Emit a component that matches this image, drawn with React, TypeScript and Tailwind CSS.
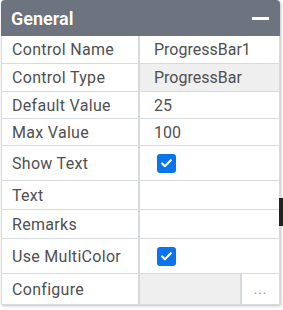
import { Check } from 'lucide-react';

type Row = {
  label: string;
  h: string;
  value?: string;
  kind?: 'text' | 'readonly' | 'check' | 'button';
};

const rows: Row[] = [
  { label: 'Control Name', value: 'ProgressBar1', h: 'h-[28px]' },
  { label: 'Control Type', value: 'ProgressBar', kind: 'readonly', h: 'h-[28px]' },
  { label: 'Default Value', value: '25', h: 'h-[27px]' },
  { label: 'Max Value', value: '100', h: 'h-[27px]' },
  { label: 'Show Text', kind: 'check', h: 'h-[35px]' },
  { label: 'Text', h: 'h-[29px]' },
  { label: 'Remarks', h: 'h-[29px]' },
  { label: 'Use MultiColor', kind: 'check', h: 'h-[35px]' },
  { label: 'Configure', kind: 'button', h: 'h-[31px]' },
];

function Checkbox() {
  return (
    <span className="w-[19px] h-[19px] rounded-[3px] bg-[#0a74ec] flex items-center justify-center">
      <Check className="w-[13px] h-[13px] text-white" strokeWidth={4} />
    </span>
  );
}

export default function App() {
  return (
    <div className="relative w-[283px] h-[310px] bg-white font-['Roboto','Liberation_Sans',sans-serif]">
      <div className="ml-[1px] w-[279px] shadow-[1px_1px_3px_rgba(0,0,0,0.25)] rounded-t-[4px] overflow-hidden">
        {/* Header */}
        <div className="h-[36px] bg-[#6d737f] flex items-center justify-between pl-[10px] pr-[10px]">
          <span className="text-white font-bold text-[18px] [text-shadow:0_0_1px_rgba(0,0,0,0.4)]">
            General
          </span>
          <span className="w-[17px] h-[3px] bg-white mr-[1px]" />
        </div>

        {/* Property rows */}
        <div className="border-l border-r border-[#d6d9dd]">
          {rows.map((row) => (
            <div
              key={row.label}
              className={`${row.h} flex border-b border-[#d6d9dd] text-[16px] text-[#505050]`}
            >
              <div className="w-[138px] shrink-0 border-r-2 border-[#d6d9dd] flex items-center pl-[10px] pt-[1px] tracking-[0.3px]">
                {row.label}
              </div>
              {row.kind === 'readonly' && (
                <div className="flex-1 bg-[#efefef] flex items-center pl-[14px] pt-[1px]">{row.value}</div>
              )}
              {row.kind === 'check' && (
                <div className="flex-1 flex items-center pl-[17px]">
                  <Checkbox />
                </div>
              )}
              {row.kind === 'button' && (
                <div className="flex-1 flex">
                  <div className="flex-1 bg-[#efefef] border-r-2 border-[#d6d9dd]" />
                  <div className="w-[37px] flex items-end justify-center pb-[5px] text-[13px] text-[#8a8f99] tracking-[1px]">
                    ...
                  </div>
                </div>
              )}
              {(row.kind === undefined || row.kind === 'text') && (
                <div className="flex-1 flex items-center pl-[14px] pt-[1px]">{row.value}</div>
              )}
            </div>
          ))}
        </div>
      </div>

      {/* Scrollbar thumb peeking at the right edge */}
      <div className="absolute left-[279px] top-[198px] w-[4px] h-[28px] bg-[#222]" />
    </div>
  );
}
